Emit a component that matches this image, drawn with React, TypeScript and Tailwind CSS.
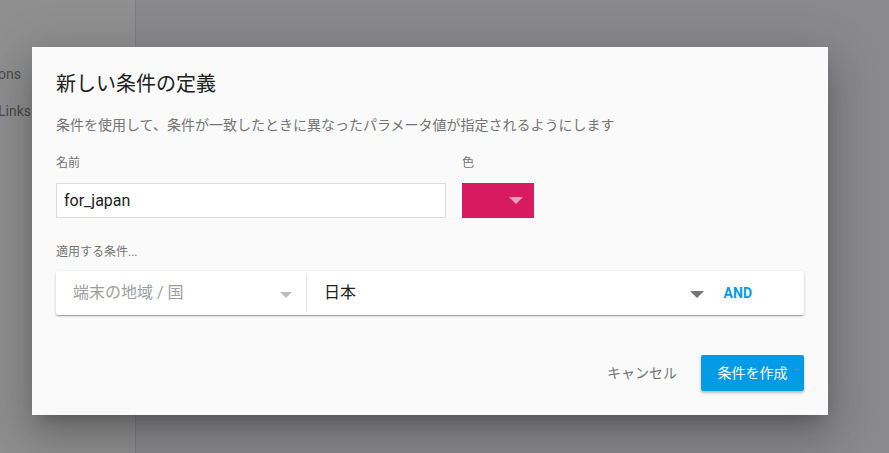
import React from "react";

const FONT = { fontFamily: 'Roboto, "Noto Sans CJK JP", "Noto Sans", sans-serif' };

function Caret({ className }: { className: string }) {
  return <span className={`inline-block h-0 w-0 border-x-transparent ${className}`} />;
}

export default function App() {
  return (
    <div className="relative flex h-[453px] w-[889px] overflow-hidden bg-[#8a8a8c]" style={FONT}>
      {/* sidebar behind the scrim */}
      <div className="w-[136px] shrink-0 border-r border-[#7e7e80] bg-[#8f8f8f] text-[14px] text-[#4a4a4a]">
        <div className="mt-[64px] flex w-[21px] justify-end whitespace-nowrap">Functions</div>
        <div className="mt-[16px] flex w-[31px] justify-end whitespace-nowrap">Dynamic Links</div>
      </div>
      <div className="flex-1" />

      {/* dialog */}
      <div className="absolute left-[32px] top-[47px] flex w-[796px] flex-col bg-[#fafafa] px-[24px] pb-[24px] pt-[23px] shadow-[0_11px_15px_-7px_rgba(0,0,0,0.2),0_24px_38px_3px_rgba(0,0,0,0.14),0_9px_46px_8px_rgba(0,0,0,0.12)]">
        <h2 className="text-[20px] leading-[28px] text-[#212121]">新しい条件の定義</h2>
        <p className="mt-[17px] text-[14px] leading-[20px] text-[#757575]">
          条件を使用して、条件が一致したときに異なったパラメータ値が指定されるようにします
        </p>

        <div className="mt-[20px] flex gap-[16px]">
          <div className="flex w-[390px] flex-col">
            <label className="text-[12px] leading-[16px] text-[#757575]">名前</label>
            <div className="mt-[12px] flex h-[35px] items-center border border-[#dcdcdc] bg-white px-[7px] text-[16px] text-[#212121]">
              for_japan
            </div>
          </div>
          <div className="flex flex-col">
            <label className="text-[12px] leading-[16px] text-[#757575]">色</label>
            <div className="mt-[12px] flex h-[35px] w-[72px] items-center justify-end bg-[#d81b60] pr-[11px]">
              <Caret className="border-x-[7px] border-t-[7px] border-t-[#f39bbd]" />
            </div>
          </div>
        </div>

        <div className="mt-[26px] text-[12px] leading-[16px] text-[#757575]">適用する条件...</div>

        <div className="mt-[11px] flex h-[44px] items-center rounded-[2px] bg-white shadow-[0_1px_3px_rgba(0,0,0,0.2),0_1px_1px_rgba(0,0,0,0.14),0_2px_1px_-1px_rgba(0,0,0,0.12)]">
          <div className="flex h-full w-[250px] items-center pl-[17px] pr-[14px]">
            <span className="text-[16px] text-[#9e9e9e]">端末の地域 / 国</span>
            <Caret className="ml-auto mt-[3px] border-x-[6px] border-t-[6px] border-t-[#bdbdbd]" />
          </div>
          <div className="h-[37px] w-px bg-[#e6e6e6]" />
          <div className="flex h-full flex-1 items-center pl-[17px]">
            <span className="text-[16px] text-[#212121]">日本</span>
            <Caret className="ml-auto mt-[3px] border-x-[7px] border-t-[7px] border-t-[#757575]" />
            <span className="ml-[20px] mr-[52px] text-[14px] font-bold text-[#039be5]">AND</span>
          </div>
        </div>

        <div className="mt-[40px] flex items-center justify-end">
          <button className="text-[14px] text-[#757575]">キャンセル</button>
          <button className="ml-[24px] h-[36px] w-[103px] rounded-[2px] bg-[#039be5] text-[14px] text-white shadow-[0_2px_3px_rgba(0,0,0,0.25)]">
            条件を作成
          </button>
        </div>
      </div>
    </div>
  );
}
